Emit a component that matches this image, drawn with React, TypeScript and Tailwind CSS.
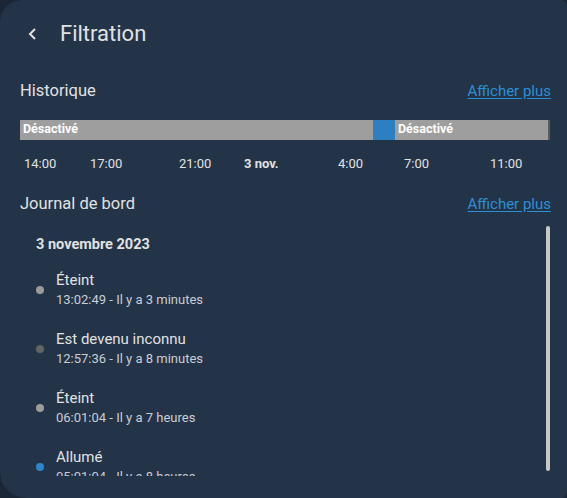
import React from 'react';

const ticks = [
  { label: '14:00', cls: 'left-[4px]' },
  { label: '17:00', cls: 'left-[70px]' },
  { label: '21:00', cls: 'left-[159px]' },
  { label: '3 nov.', cls: 'left-[224px] font-bold' },
  { label: '4:00', cls: 'left-[318px]' },
  { label: '7:00', cls: 'left-[384px]' },
  { label: '11:00', cls: 'left-[470px]' },
];

const entries = [
  { title: 'Éteint', sub: '13:02:49 - Il y a 3 minutes', dot: 'bg-[#9b9b9b]' },
  { title: 'Est devenu inconnu', sub: '12:57:36 - Il y a 8 minutes', dot: 'bg-[#646464]' },
  { title: 'Éteint', sub: '06:01:04 - Il y a 7 heures', dot: 'bg-[#9b9b9b]' },
  { title: 'Allumé', sub: '05:01:04 - Il y a 8 heures', dot: 'bg-[#2c86c9]' },
];

const SectionHeader: React.FC<{ title: string }> = ({ title }) => (
  <div className="flex items-center justify-between pl-5 pr-[16px]">
    <span className="text-[16.5px] text-[#e1e1e1]">{title}</span>
    <a className="text-[15px] text-[#2b8fd6] underline underline-offset-2">Afficher plus</a>
  </div>
);

export default function App() {
  return (
    <div className="h-[498px] w-[567px] bg-[#1a2636]" style={{ fontFamily: 'Roboto, "Liberation Sans", sans-serif' }}>
      <div className="flex h-full flex-col overflow-hidden rounded-tl-[22px] rounded-tr-[6px] rounded-br-[6px] rounded-bl-[26px] bg-[#233449]">
        {/* header */}
        <div className="flex h-[66px] items-center pl-[27px] pt-[1px]">
          <svg width="10" height="12" viewBox="0 0 10 12" className="text-[#e1e1e1]">
            <polyline points="8,1 3,6 8,11" fill="none" stroke="currentColor" strokeWidth="2" />
          </svg>
          <span className="ml-[23px] text-[22px] text-[#e1e1e1]">Filtration</span>
        </div>

        {/* history */}
        <div className="mt-[13px]">
          <SectionHeader title="Historique" />
          <div className="mx-5 mt-[16px] flex h-[20px] w-[530px]">
            <div className="flex w-[353px] items-center bg-[#9e9e9e] pl-[3px] text-[12.5px] font-bold text-white">Désactivé</div>
            <div className="w-[22px] bg-[#2c7fc0]" />
            <div className="flex w-[153px] items-center bg-[#9e9e9e] pl-[3px] text-[12.5px] font-bold text-white">Désactivé</div>
            <div className="w-[2px] bg-[#5c5c5c]" />
          </div>
          <div className="relative mx-5 mt-[14px] h-[16px] text-[13px] text-[#e1e1e1]">
            {ticks.map((t) => (
              <span key={t.label} className={`absolute top-0 ${t.cls}`}>
                {t.label}
              </span>
            ))}
          </div>
        </div>

        {/* logbook */}
        <div className="mt-[22px]">
          <SectionHeader title="Journal de bord" />
          <div className="relative mt-[9px] h-[250px] overflow-hidden">
            <div className="absolute right-[17px] top-0 h-[245px] w-[4px] rounded-full bg-[#c8c8c8]" />
            <div className="pl-[36px] pt-[8px] text-[14.5px] font-bold text-[#e1e1e1]">3 novembre 2023</div>
            <div className="mt-[15px] flex flex-col gap-[20px]">
              {entries.map((e, i) => (
                <div key={i} className="flex items-center pl-[36px]">
                  <span className={`h-[8px] w-[8px] rounded-full ${e.dot}`} />
                  <div className="ml-[12px] flex flex-col">
                    <span className="text-[15px] leading-[20px] text-[#e1e1e1]">{e.title}</span>
                    <span className="mt-[1px] text-[13px] leading-[18px] text-[#c9ccd1]">{e.sub}</span>
                  </div>
                </div>
              ))}
            </div>
          </div>
        </div>
      </div>
    </div>
  );
}
